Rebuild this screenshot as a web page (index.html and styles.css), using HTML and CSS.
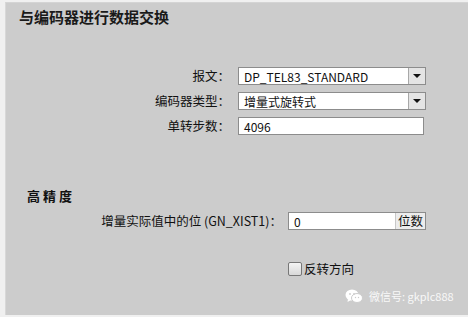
FILE: index.html
```html
<!DOCTYPE html>
<html lang="zh-CN">
<head>
    <meta charset="UTF-8">
    <title>与编码器进行数据交换</title>
    <link rel="stylesheet" href="styles.css">
</head>
<body>
    <div class="panel">
        <h1 class="title">与编码器进行数据交换</h1>

        <div class="form">
            <div class="row">
                <label class="label">报文：</label>
                <div class="select">
                    <span class="value">DP_TEL83_STANDARD</span>
                    <span class="arrow"></span>
                </div>
            </div>
            <div class="row">
                <label class="label">编码器类型：</label>
                <div class="select">
                    <span class="value">增量式旋转式</span>
                    <span class="arrow"></span>
                </div>
            </div>
            <div class="row">
                <label class="label">单转步数：</label>
                <div class="input">4096</div>
            </div>
        </div>

        <h2 class="section">高精度</h2>

        <div class="row precision">
            <label class="label">增量实际值中的位 (GN_XIST1)：</label>
            <div class="input unit-input">
                <span>0</span>
                <span class="unit">位数</span>
            </div>
        </div>

        <div class="check-row">
            <span class="checkbox"></span>
            <span>反转方向</span>
        </div>

        <div class="watermark">
            <svg width="18" height="14" viewBox="0 0 18 14">
                <ellipse cx="7" cy="6" rx="6.5" ry="5.5" fill="#fff"/>
                <path d="M3 10 L2.5 13 L6 11 Z" fill="#fff"/>
                <ellipse cx="12" cy="9" rx="5.5" ry="4.5" fill="#fff" stroke="#ccc" stroke-width="1"/>
                <circle cx="5" cy="5" r="0.9" fill="#ccc"/>
                <circle cx="9" cy="5" r="0.9" fill="#ccc"/>
                <circle cx="10.5" cy="8.5" r="0.7" fill="#ccc"/>
                <circle cx="13.5" cy="8.5" r="0.7" fill="#ccc"/>
            </svg>
            <span>微信号: gkplc888</span>
        </div>
    </div>
</body>
</html>
```

FILE: styles.css
```css
body {
    margin: 0;
    width: 468px;
    height: 317px;
    background: #f0f0f0;
    font-family: "Noto Sans CJK SC", "Liberation Sans", sans-serif;
    font-size: 12px;
    color: #111;
    overflow: hidden;
}
.panel {
    position: relative;
    margin: 2px 0 2px 5px;
    height: 313px;
    background: #cccccc;
    border-left: 1px solid #d8d8d8;
    border-top: 1px solid #d4d4d4;
    box-sizing: border-box;
    padding: 3px 0 0 13px;
}
.title {
    margin: 0;
    font-size: 15px;
    font-weight: bold;
    line-height: 22px;
    color: #1a1a1a;
}
.form {
    margin-top: 39px;
    display: flex;
    flex-direction: column;
    gap: 7px;
}
.row {
    display: flex;
    align-items: center;
}
.label {
    width: 219px;
    text-align: right;
    padding-right: 8px;
    box-sizing: border-box;
    line-height: 18px;
    font-size: 12.5px;
}
.select,
.input {
    width: 188px;
    height: 18px;
    box-sizing: border-box;
    background: #fff;
    border: 1px solid #8c8c8c;
    display: flex;
    align-items: center;
    padding-left: 5px;
    font-size: 12px;
}
.select .value {
    flex: 1;
}
.arrow {
    width: 16px;
    height: 16px;
    background: #e4e4e4;
    border-left: 1px solid #a8a8a8;
    position: relative;
}
.arrow::after {
    content: "";
    position: absolute;
    left: 4px;
    top: 6px;
    border-left: 4px solid transparent;
    border-right: 4px solid transparent;
    border-top: 4px solid #111;
}
.input {
    width: 186px;
}
.section {
    margin: 52px 0 0 8px;
    font-size: 13px;
    font-weight: bold;
    letter-spacing: 3px;
    line-height: 18px;
}
.precision {
    margin-top: 7px;
}
.precision .label {
    width: 269px;
    padding-right: 6px;
}
.unit-input {
    width: 138px;
    justify-content: space-between;
    padding-right: 0;
}
.unit {
    background: #ececec;
    border-left: 1px solid #c8c8c8;
    height: 16px;
    line-height: 16px;
    padding: 0 2px;
    font-size: 12.5px;
}
.check-row {
    margin: 29px 0 0 269px;
    display: flex;
    align-items: center;
    gap: 2px;
    font-size: 12.5px;
}
.checkbox {
    width: 12px;
    height: 12px;
    border: 1px solid #777;
    border-radius: 2px;
    background: linear-gradient(#f4f4f4, #d8d8d8);
}
.watermark {
    position: absolute;
    left: 339px;
    top: 285px;
    display: flex;
    align-items: center;
    gap: 6px;
    color: #f8f8f8;
    font-size: 11px;
}
```
